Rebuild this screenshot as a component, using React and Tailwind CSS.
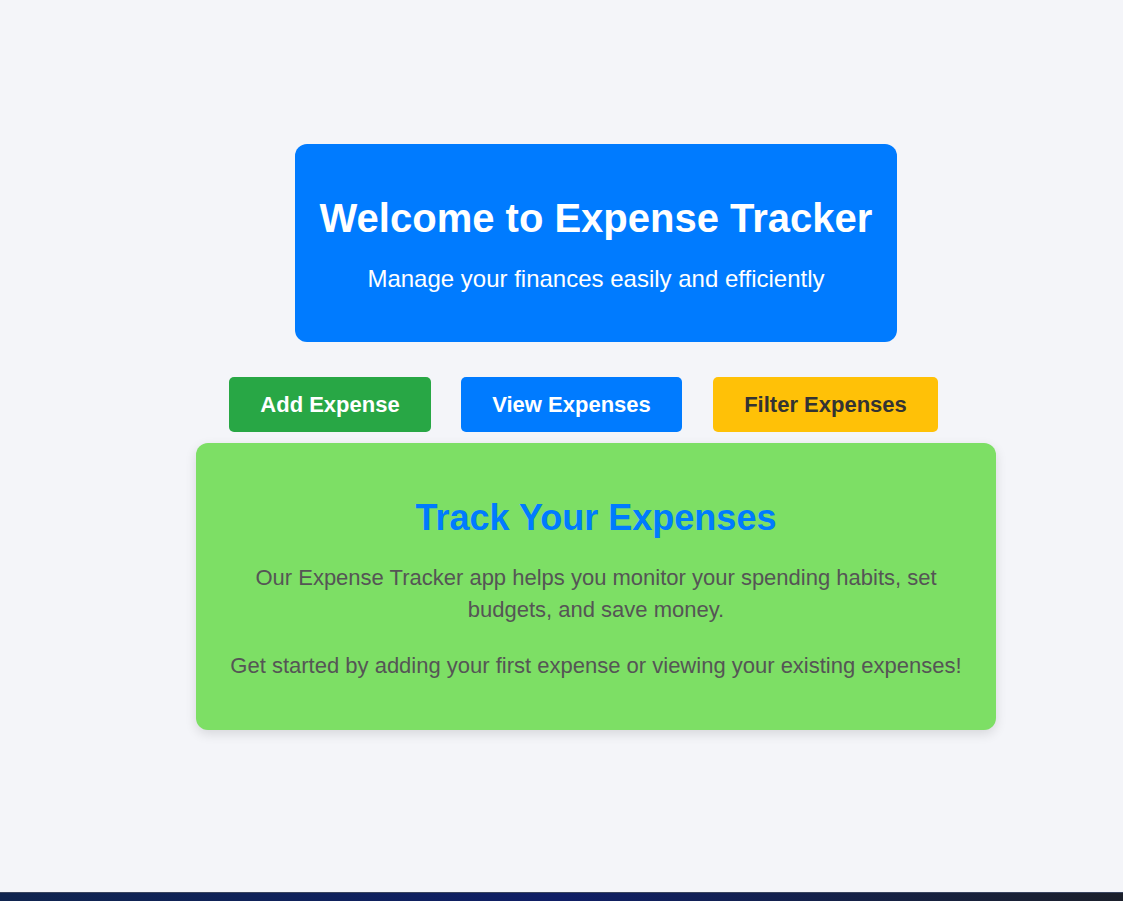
import React from 'react';

function App() {
    return (
        <div className="min-h-[901px] bg-[#f4f5f9] flex flex-col font-['Liberation_Sans',Arial,sans-serif]">
            <div className="flex-1 pt-[144px]">
                <div className="ml-[196px] w-[800px]">
                    <div className="mx-auto w-[602px] rounded-[12px] bg-[#007bff] pt-[51px] pb-[49px] text-center text-white">
                        <h1 className="text-[40px] font-bold leading-[46px]">Welcome to Expense Tracker</h1>
                        <p className="mt-6 text-[24px] leading-[28px]">Manage your finances easily and efficiently</p>
                    </div>

                    <div className="mt-[35px] flex gap-[30px] pl-[33px]">
                        <button className="h-[55px] w-[202px] rounded-[5px] bg-[#28a745] text-[22px] font-bold text-white">
                            Add Expense
                        </button>
                        <button className="h-[55px] w-[221px] rounded-[5px] bg-[#007bff] text-[22px] font-bold text-white">
                            View Expenses
                        </button>
                        <button className="ml-px h-[55px] w-[225px] rounded-[5px] bg-[#ffc107] text-[22px] font-bold text-[#333333]">
                            Filter Expenses
                        </button>
                    </div>

                    <div className="mt-[11px] rounded-[12px] bg-[#7ddf65] px-[30px] pt-[54px] pb-[48px] text-center shadow-[0_4px_12px_rgba(0,0,0,0.12)]">
                        <h2 className="text-[36px] font-bold leading-[41px] text-[#007bff]">Track Your Expenses</h2>
                        <p className="mt-6 text-[22px] leading-[32px] text-[#555555]">
                            Our Expense Tracker app helps you monitor your spending habits, set budgets, and save money.
                        </p>
                        <p className="mt-6 text-[22px] leading-[32px] text-[#555555]">
                            Get started by adding your first expense or viewing your existing expenses!
                        </p>
                    </div>
                </div>
            </div>
            <div className="h-[9px] border-t border-[#3a4560] bg-gradient-to-r from-[#10244f] via-[#0f1e66] to-[#1b1f2b]"></div>
        </div>
    );
}

export default App;
